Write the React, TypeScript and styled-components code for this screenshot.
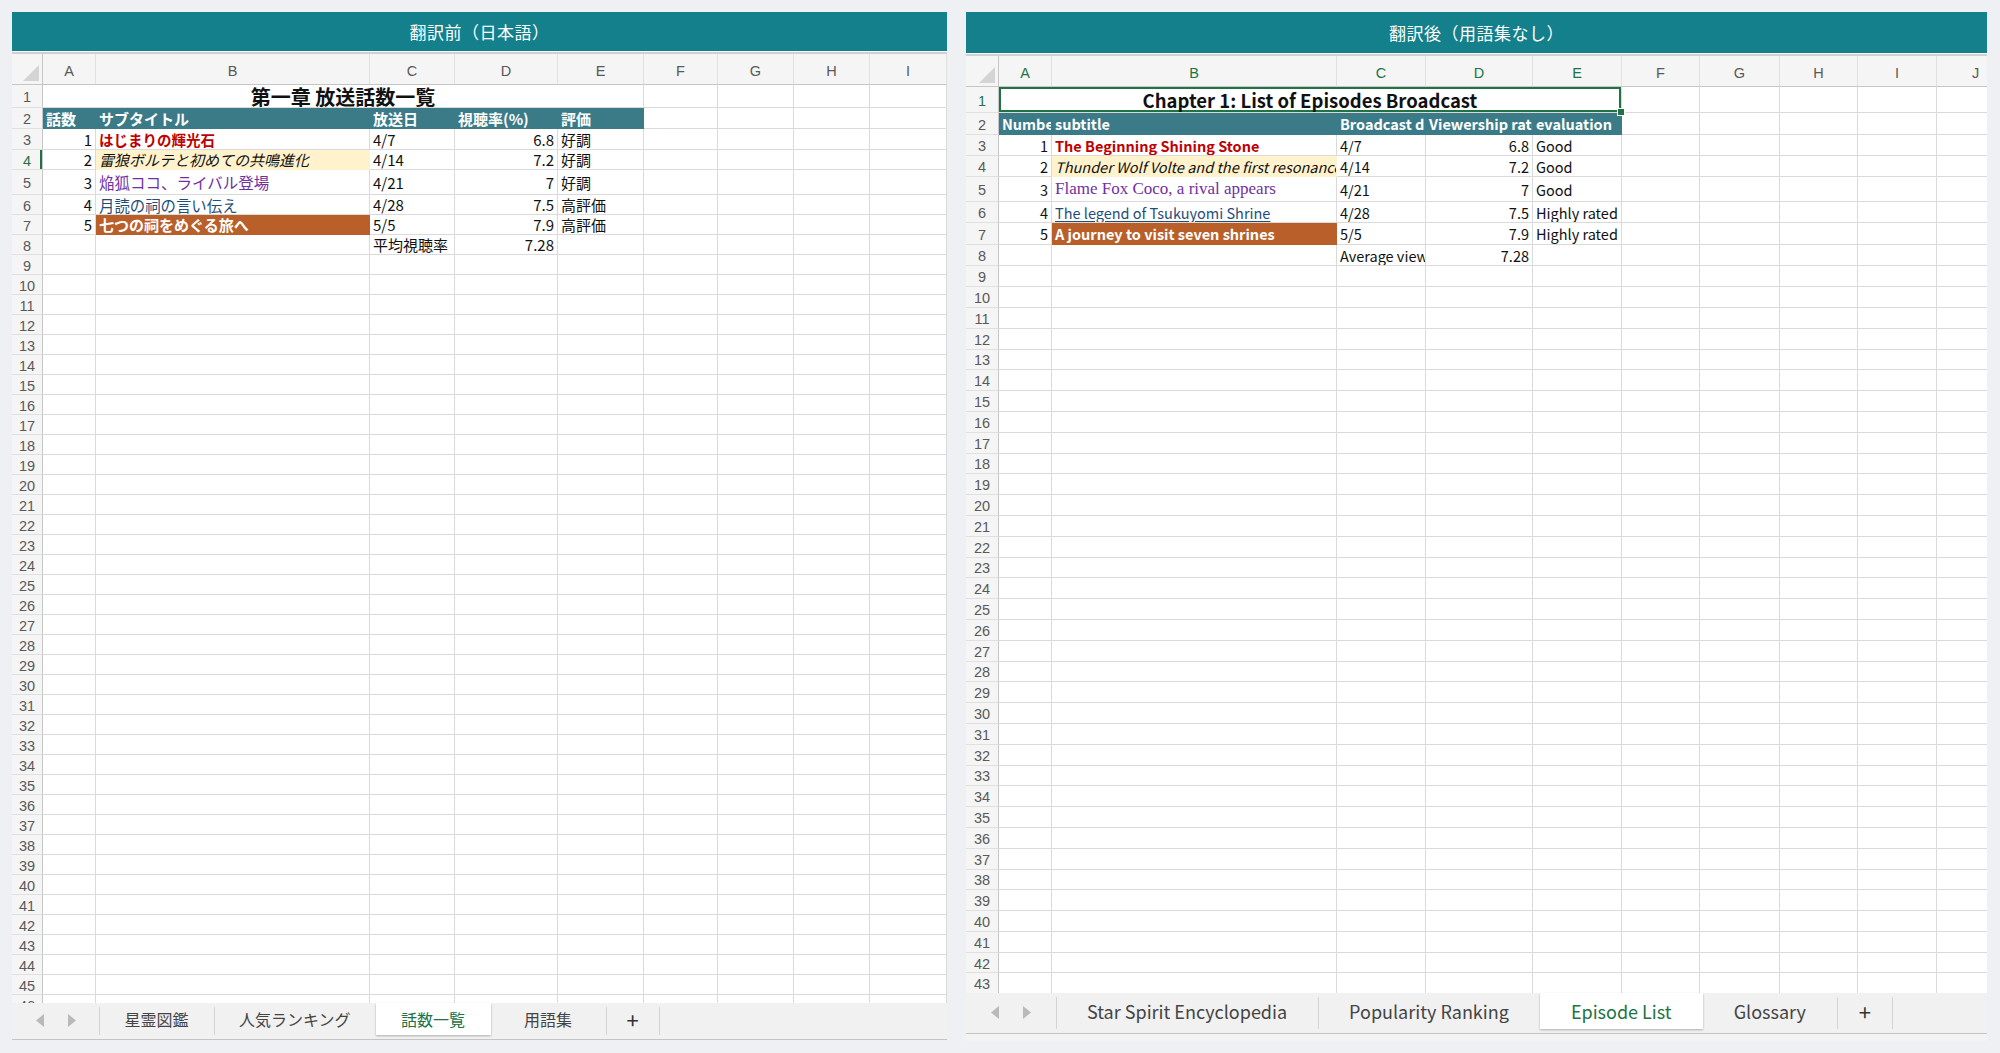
import React from 'react';
import styled, { createGlobalStyle, css } from 'styled-components';

const GREEN = '#217346';
const GRID = '#dadada';
const HEAD_LINE = '#c6c6c6';
const HEAD_BG = '#f5f5f5';
const BAND = '#3b7b88';
const ORANGE = '#b95f2a';
const CREAM = '#fff2cc';
const RED = '#c00000';
const PURPLE = '#7030a0';
const LINK = '#1f4e79';

const GlobalStyle = createGlobalStyle`
  html, body {
    margin: 0;
    background: #eef0f3;
  }
  body {
    font-family: "Noto Sans CJK JP", "Noto Sans", sans-serif;
  }
`;

const Page = styled.div`
  display: flex;
  align-items: flex-start;
  gap: 19px;
  padding: 12px 0 0 12px;
  height: 1053px;
  box-sizing: border-box;
  overflow: hidden;
`;

const Panel = styled.section<{ $width: number }>`
  flex: none;
  width: ${(p) => p.$width}px;
  display: flex;
  flex-direction: column;
  background: #fff;
  overflow: hidden;
`;

const TitleBar = styled.header<{ $height: number }>`
  height: ${(p) => p.$height}px;
  background: #13808c;
  color: #fff;
  font-size: 17px;
  letter-spacing: 0.5px;
  display: flex;
  align-items: center;
  justify-content: center;
`;

const SheetFrame = styled.div<{ $height: number }>`
  height: ${(p) => p.$height}px;
  margin-top: 1px;
  border-top: 2px solid #cfd2d4;
  overflow: hidden;
`;

const Grid = styled.div<{ $cols: string; $rows: string; $font: number }>`
  display: grid;
  grid-template-columns: ${(p) => p.$cols};
  grid-template-rows: ${(p) => p.$rows};
  font-size: ${(p) => p.$font}px;
  color: #111;
`;

const headText = css`
  font-family: "Liberation Sans", Arial, sans-serif;
  font-size: 14.5px;
  display: flex;
  align-items: center;
  justify-content: center;
  background: ${HEAD_BG};
  box-sizing: border-box;
`;

const Corner = styled.div`
  ${headText};
  border-right: 1px solid ${HEAD_LINE};
  border-bottom: 1px solid ${HEAD_LINE};
  align-items: flex-end;
  justify-content: flex-end;
  padding: 0 3px 3px 0;
`;

const ColHead = styled.div<{ $active: boolean }>`
  ${headText};
  padding-top: 3px;
  color: ${(p) => (p.$active ? GREEN : '#595959')};
  border-right: 1px solid #e0e0e0;
  border-bottom: 1px solid ${HEAD_LINE};
`;

const RowHead = styled.div<{ $active: boolean; $marker: boolean }>`
  ${headText};
  padding-top: 2px;
  color: ${(p) => (p.$active ? GREEN : '#595959')};
  border-right: 1px solid ${HEAD_LINE};
  border-bottom: 1px solid #e0e0e0;
  ${(p) => p.$marker && `box-shadow: inset -2px 0 0 ${GREEN};`}
`;

type Align = 'left' | 'right' | 'center';

const CellBox = styled.div<{
  $align: Align;
  $span: number;
  $fill?: string;
  $color?: string;
  $bold?: boolean;
  $italic?: boolean;
  $underline?: boolean;
  $serif?: boolean;
  $size?: number;
  $picked?: boolean;
}>`
  grid-column: span ${(p) => p.$span};
  display: flex;
  align-items: center;
  justify-content: ${(p) => (p.$align === 'right' ? 'flex-end' : p.$align === 'center' ? 'center' : 'flex-start')};
  padding: 0 3px;
  min-width: 0;
  box-sizing: border-box;
  white-space: nowrap;
  overflow: hidden;
  background: ${(p) => p.$fill ?? '#fff'};
  border-right: 1px solid ${(p) => p.$fill ?? GRID};
  border-bottom: 1px solid ${(p) => p.$fill ?? GRID};
  color: ${(p) => p.$color ?? '#111'};
  font-weight: ${(p) => (p.$bold ? 700 : 400)};
  font-style: ${(p) => (p.$italic ? 'italic' : 'normal')};
  text-decoration: ${(p) => (p.$underline ? 'underline' : 'none')};
  text-underline-offset: 2px;
  ${(p) => p.$serif && `font-family: "Liberation Serif", "Noto Sans CJK JP", serif;`}
  ${(p) => p.$size && `font-size: ${p.$size}px;`}
  ${(p) =>
    p.$picked &&
    css`
      position: relative;
      overflow: visible;
      box-shadow: inset 0 0 0 2px ${GREEN};
      &::after {
        content: '';
        position: absolute;
        right: -4px;
        bottom: -4px;
        width: 6px;
        height: 6px;
        background: ${GREEN};
        border: 1px solid #fff;
        z-index: 2;
      }
    `}
`;

const TabBar = styled.div<{ $height: number }>`
  flex: none;
  height: ${(p) => p.$height}px;
  display: flex;
  align-items: flex-start;
  background: #f1f1f1;
  border-bottom: 1px solid #c4c4c4;
  box-sizing: border-box;
`;

const Arrows = styled.div<{ $width: number; $height: number }>`
  flex: none;
  width: ${(p) => p.$width}px;
  height: ${(p) => p.$height}px;
  display: flex;
  align-items: center;
  justify-content: center;
  gap: 24px;
  padding-top: 2px;
  box-sizing: border-box;
`;

const Tab = styled.div<{
  $active?: boolean;
  $pad: number;
  $min: number;
  $height: number;
  $edge: boolean;
  $font: number;
}>`
  flex: none;
  height: ${(p) => p.$height}px;
  min-width: ${(p) => p.$min}px;
  padding: 0 ${(p) => p.$pad}px;
  box-sizing: border-box;
  display: flex;
  align-items: center;
  justify-content: center;
  font-size: ${(p) => p.$font}px;
  color: ${(p) => (p.$active ? GREEN : '#444')};
  position: relative;
  ${(p) =>
    p.$active
      ? css`
          background: #fff;
          box-shadow: 0 1px 2px rgba(0, 0, 0, 0.28);
          z-index: 1;
        `
      : p.$edge &&
        css`
          &::before {
            content: '';
            position: absolute;
            left: 0;
            top: 4px;
            bottom: 0;
            width: 1px;
            background: #d3d3d3;
          }
        `}
`;

const PlusTab = styled(Tab)`
  color: #333;
  &::after {
    content: '';
    position: absolute;
    right: 0;
    top: 4px;
    bottom: 0;
    width: 1px;
    background: #d3d3d3;
  }
`;

const ScrollStrip = styled.div`
  flex: none;
  height: 7px;
  background: #f3f3f3;
`;

type Cell = {
  text?: string;
  span?: number;
  align?: Align;
  bold?: boolean;
  italic?: boolean;
  underline?: boolean;
  serif?: boolean;
  color?: string;
  fill?: string;
  size?: number;
  picked?: boolean;
};

type SheetSpec = {
  cols: string[];
  widths: number[];
  heights: number[];
  rowHeight: number;
  rowCount: number;
  font: number;
  data: Record<number, Cell[]>;
  activeCols: number[];
  activeRow: number;
  rowMarker: boolean;
};

const Triangle = () => (
  <svg width="16" height="16" viewBox="0 0 16 16">
    <polygon points="16,0 16,16 0,16" fill="#d4d4d4" />
  </svg>
);

const Arrow = ({ dir }: { dir: 'left' | 'right' }) => (
  <svg width="8" height="13" viewBox="0 0 8 13">
    <polygon points={dir === 'left' ? '8,0 8,13 0,6.5' : '0,0 0,13 8,6.5'} fill="#b9b9b9" />
  </svg>
);

const Sheet = ({ spec }: { spec: SheetSpec }) => {
  const explicit = spec.heights.length - 1;
  const rows = [
    ...spec.heights.map((h) => `${h}px`),
    `repeat(${spec.rowCount - explicit}, ${spec.rowHeight}px)`,
  ].join(' ');
  const cols = spec.widths.map((w) => `${w}px`).join(' ');

  const items: React.ReactNode[] = [
    <Corner key="corner">
      <Triangle />
    </Corner>,
  ];
  spec.cols.forEach((c, i) =>
    items.push(
      <ColHead key={`h${c}`} $active={spec.activeCols.includes(i)}>
        {c}
      </ColHead>
    )
  );

  for (let r = 1; r <= spec.rowCount; r++) {
    const active = r === spec.activeRow;
    items.push(
      <RowHead key={`r${r}`} $active={active} $marker={active && spec.rowMarker}>
        {r}
      </RowHead>
    );
    const row = spec.data[r] ?? [];
    let used = 0;
    row.forEach((c, i) => {
      const span = c.span ?? 1;
      used += span;
      items.push(
        <CellBox
          key={`c${r}-${i}`}
          $span={span}
          $align={c.align ?? 'left'}
          $fill={c.fill}
          $color={c.color}
          $bold={c.bold}
          $italic={c.italic}
          $underline={c.underline}
          $serif={c.serif}
          $size={c.size}
          $picked={c.picked}
        >
          {c.text}
        </CellBox>
      );
    });
    for (let k = used; k < spec.cols.length; k++) {
      items.push(<CellBox key={`e${r}-${k}`} $span={1} $align="left" />);
    }
  }

  return (
    <Grid $cols={cols} $rows={rows} $font={spec.font}>
      {items}
    </Grid>
  );
};

const band = (text: string): Cell => ({ text, bold: true, color: '#fff', fill: BAND });
const num = (text: string): Cell => ({ text, align: 'right' });
const plain = (text: string): Cell => ({ text });

const beforeSheet: SheetSpec = {
  cols: ['A', 'B', 'C', 'D', 'E', 'F', 'G', 'H', 'I'],
  widths: [31, 53, 274, 85, 103, 86, 74, 76, 76, 77],
  heights: [31, 23, 21, 21, 20, 25, 20, 20, 20],
  rowHeight: 20,
  rowCount: 46,
  font: 15,
  activeCols: [],
  activeRow: 4,
  rowMarker: true,
  data: {
    1: [{ text: '第一章 放送話数一覧', span: 5, align: 'center', bold: true, size: 20 }],
    2: [band('話数'), band('サブタイトル'), band('放送日'), band('視聴率(%)'), band('評価')],
    3: [num('1'), { text: 'はじまりの輝光石', bold: true, color: RED, size: 14.5 }, plain('4/7'), num('6.8'), plain('好調')],
    4: [num('2'), { text: '雷狼ボルテと初めての共鳴進化', italic: true, fill: CREAM }, plain('4/14'), num('7.2'), plain('好調')],
    5: [num('3'), { text: '焔狐ココ、ライバル登場', color: PURPLE, serif: true, size: 15.5 }, plain('4/21'), num('7'), plain('好調')],
    6: [num('4'), { text: '月読の祠の言い伝え', underline: true, color: LINK, size: 15.4 }, plain('4/28'), num('7.5'), plain('高評価')],
    7: [num('5'), { text: '七つの祠をめぐる旅へ', bold: true, color: '#fff', fill: ORANGE }, plain('5/5'), num('7.9'), plain('高評価')],
    8: [plain(''), plain(''), plain('平均視聴率'), num('7.28'), plain('')],
  },
};

const afterSheet: SheetSpec = {
  cols: ['A', 'B', 'C', 'D', 'E', 'F', 'G', 'H', 'I', 'J'],
  widths: [33, 53, 285, 89, 107, 89, 78, 80, 78, 79, 78],
  heights: [31, 26, 22, 21, 21, 25, 21, 22, 21.4],
  rowHeight: 20.8,
  rowCount: 44,
  font: 14.5,
  activeCols: [0, 1, 2, 3, 4],
  activeRow: 1,
  rowMarker: false,
  data: {
    1: [{ text: 'Chapter 1: List of Episodes Broadcast', span: 5, align: 'center', bold: true, size: 18.5, picked: true }],
    2: [band('Number'), band('subtitle'), band('Broadcast date'), band('Viewership rate'), band('evaluation')],
    3: [num('1'), { text: 'The Beginning Shining Stone', bold: true, color: RED }, plain('4/7'), num('6.8'), plain('Good')],
    4: [num('2'), { text: 'Thunder Wolf Volte and the first resonance evolution', italic: true, fill: CREAM }, plain('4/14'), num('7.2'), plain('Good')],
    5: [num('3'), { text: 'Flame Fox Coco, a rival appears', color: PURPLE, serif: true, size: 17 }, plain('4/21'), num('7'), plain('Good')],
    6: [num('4'), { text: 'The legend of Tsukuyomi Shrine', underline: true, color: LINK }, plain('4/28'), num('7.5'), plain('Highly rated')],
    7: [num('5'), { text: 'A journey to visit seven shrines', bold: true, color: '#fff', fill: ORANGE }, plain('5/5'), num('7.9'), plain('Highly rated')],
    8: [plain(''), plain(''), plain('Average viewership rating'), num('7.28'), plain('')],
  },
};

type TabSpec = {
  names: string[];
  active: number;
  pad: number;
  min: number;
  plus: number;
  font: number;
  arrows: number;
  row: number;
  bar: number;
};

const SheetTabs = ({ tabs }: { tabs: TabSpec }) => (
  <TabBar $height={tabs.bar}>
    <Arrows $width={tabs.arrows} $height={tabs.row}>
      <Arrow dir="left" />
      <Arrow dir="right" />
    </Arrows>
    {tabs.names.map((n, i) => (
      <Tab
        key={n}
        $active={i === tabs.active}
        $pad={tabs.pad}
        $min={tabs.min}
        $font={tabs.font}
        $height={tabs.row}
        $edge={i !== tabs.active + 1}
      >
        {n}
      </Tab>
    ))}
    <PlusTab
      $pad={0}
      $min={tabs.plus}
      $font={22}
      $height={tabs.row}
      $edge={tabs.names.length !== tabs.active + 1}
    >
      +
    </PlusTab>
  </TabBar>
);

export default function App() {
  return (
    <>
      <GlobalStyle />
      <Page>
        <Panel $width={935}>
          <TitleBar $height={39}>翻訳前（日本語）</TitleBar>
          <SheetFrame $height={949}>
            <Sheet spec={beforeSheet} />
          </SheetFrame>
          <SheetTabs
            tabs={{
              names: ['星霊図鑑', '人気ランキング', '話数一覧', '用語集'],
              active: 2,
              pad: 25,
              min: 115,
              plus: 54,
              font: 16,
              arrows: 87,
              row: 32,
              bar: 37,
            }}
          />
        </Panel>
        <Panel $width={1021}>
          <TitleBar $height={41}>翻訳後（用語集なし）</TitleBar>
          <SheetFrame $height={937}>
            <Sheet spec={afterSheet} />
          </SheetFrame>
          <SheetTabs
            tabs={{
              names: ['Star Spirit Encyclopedia', 'Popularity Ranking', 'Episode List', 'Glossary'],
              active: 2,
              pad: 31,
              min: 0,
              plus: 56,
              font: 18,
              arrows: 90,
              row: 36,
              bar: 41,
            }}
          />
          <ScrollStrip />
        </Panel>
      </Page>
    </>
  );
}
